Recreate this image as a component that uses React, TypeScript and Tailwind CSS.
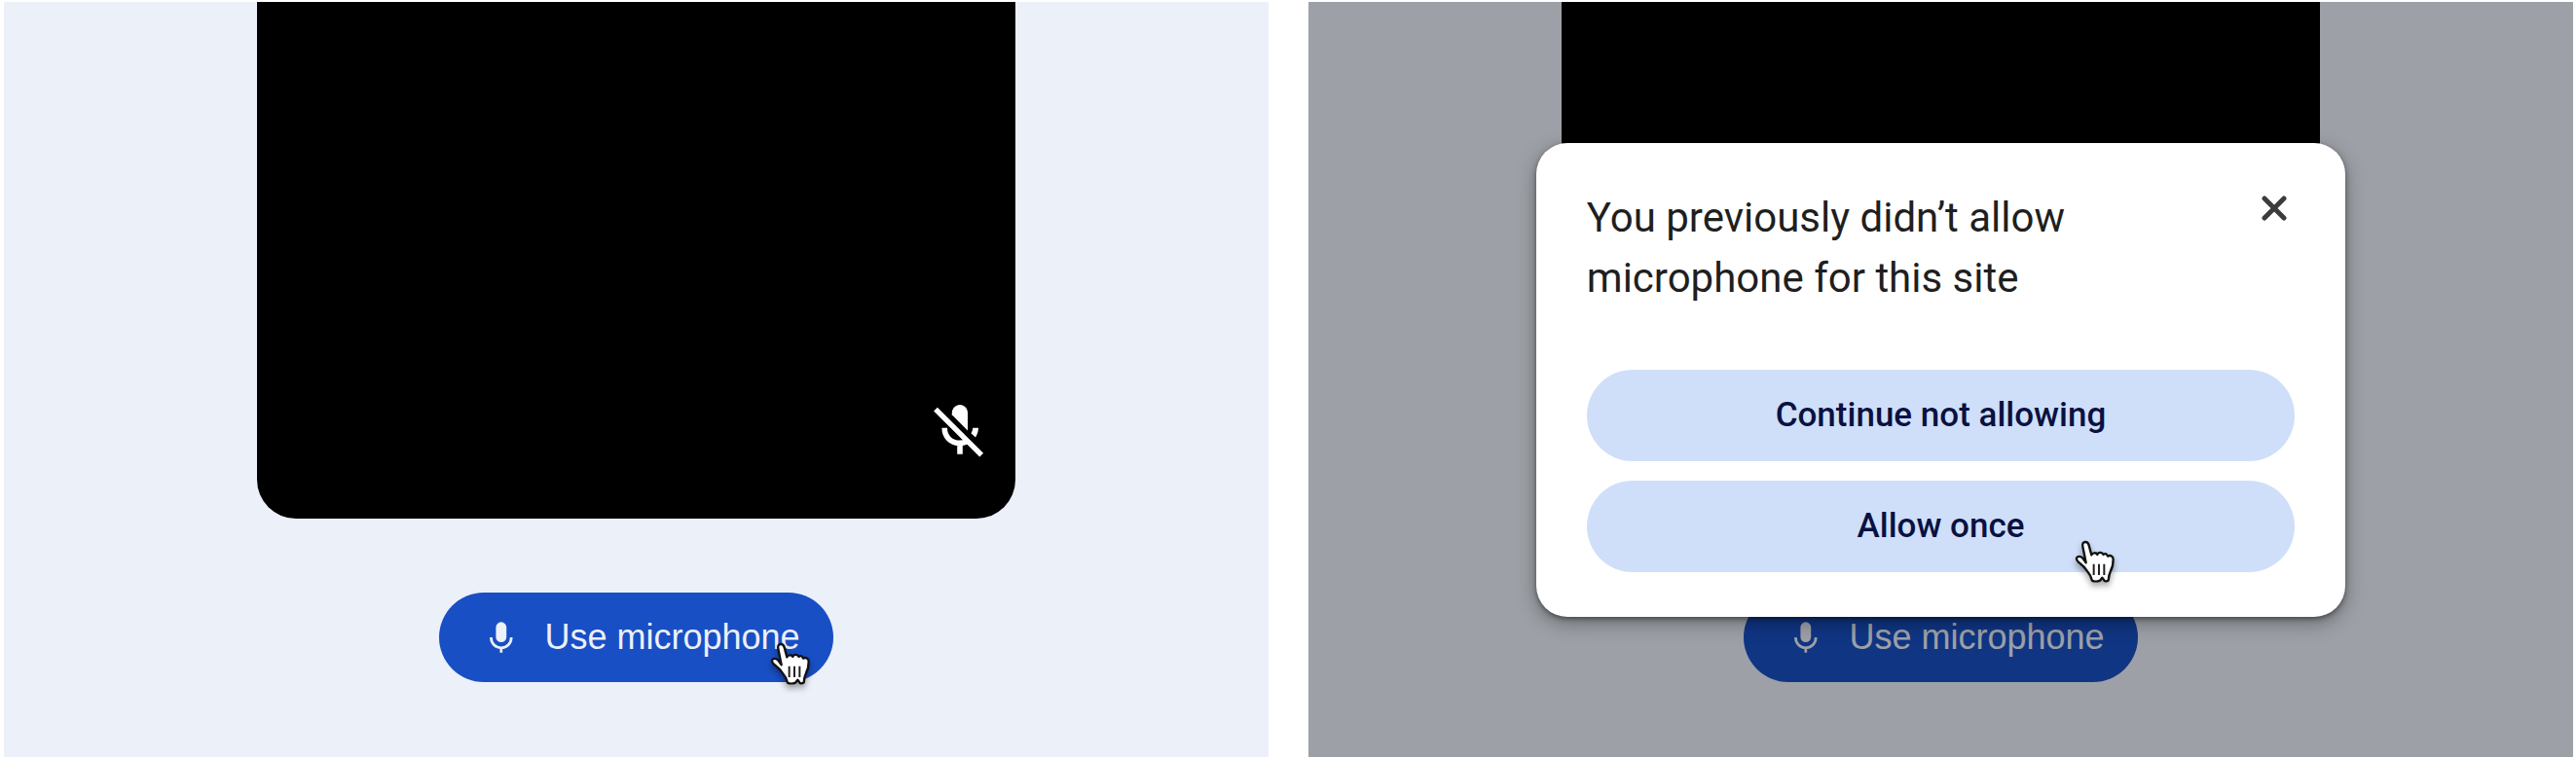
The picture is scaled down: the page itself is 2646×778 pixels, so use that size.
import type { ReactNode } from "react";

function MicIcon() {
  return (
    <svg viewBox="0 0 24 32" className="h-8 w-6 shrink-0" aria-hidden="true">
      <rect x="6.4" y="0.3" width="10.8" height="20.8" rx="5.4" fill="currentColor" />
      <path d="M1.4 16C1.4 22.4 6 26.8 11.8 26.8S22.2 22.4 22.2 16M11.8 26.8V31.8" fill="none" stroke="currentColor" strokeWidth="2.7" />
    </svg>
  );
}

function MicOffIcon() {
  return (
    <svg viewBox="0 0 54 56" className="h-14 w-[54px] text-white" role="img" aria-label="Microphone off">
      <path d="M36 27.4V9.6C36 4.8 32.4 1 28 1S19.8 4.8 19.8 9.6V11.2Z" fill="currentColor" />
      <path d="M3 5.6L50.2 52.6" fill="none" stroke="currentColor" strokeWidth="5.4" />
      <path d="M12.2 24.8C12.2 34.4 19 40.4 28 40.4C30.6 40.4 33 39.8 35.2 38.8M28 40.4V51.8" fill="none" stroke="currentColor" strokeWidth="5.6" />
      <path d="M41.2 24.8H47C46.9 28.4 45.8 31.8 44 34.6L39.4 30.2C40.6 28.6 41.2 26.8 41.2 24.8Z" fill="currentColor" />
    </svg>
  );
}

function HandCursor({ className }: { className: string }) {
  return (
    <svg
      viewBox="0 0 132 135"
      className={`pointer-events-none absolute h-[45px] w-11 overflow-visible drop-shadow-[0_4px_3px_rgba(0,0,0,0.35)] ${className}`}
      aria-hidden="true"
    >
      <path
        d="M38 70L28 20C26 11 30 6 36 6C42 6 45 9 47 16L55 46C58 38 70 38 73 45C76 36 88 37 92 45C95 40 102 42 105 50C113 45 122 50 122 59C122 74 119 86 114 95C110 103 108 112 107 124C102 129 95 128 93 123L88 116L81 125C74 128 62 128 57 125C54 113 49 104 42 96C35 86 31 80 22 74C14 68 8 61 9 56C11 49 21 49 28 56Z"
        fill="#fff"
        stroke="#111"
        strokeWidth="7"
        strokeLinejoin="round"
      />
      <path d="M62 74V108M78 74V108M94 74V108" fill="none" stroke="#222" strokeWidth="6" />
    </svg>
  );
}

function CloseIcon() {
  return (
    <svg viewBox="0 0 26 26" className="size-[26px]" aria-hidden="true">
      <path d="M3 3L23 23M23 3L3 23" stroke="currentColor" strokeWidth="5" strokeLinecap="round" />
    </svg>
  );
}

function CallPreview({ muted, pointer, children }: { muted?: boolean; pointer?: boolean; children?: ReactNode }) {
  return (
    <section className="relative flex flex-col items-center overflow-hidden bg-[#ebf0f9]">
      <div className="flex h-[531px] w-3/5 items-end justify-end rounded-b-[40px] bg-black pr-[31px] pb-[62px]">
        {muted && <MicOffIcon />}
      </div>
      <button
        type="button"
        className="relative mt-[76px] flex h-[92px] items-center gap-8 rounded-full bg-[#194fc4] pr-[34px] pl-[52px] font-['Liberation_Sans',sans-serif] text-[36px] leading-10 text-[#ebf0f9]"
      >
        <MicIcon />
        Use microphone
        {pointer && <HandCursor className="right-[22px] -bottom-1" />}
      </button>
      {children}
    </section>
  );
}

function PromptButton({ children }: { children: ReactNode }) {
  return (
    <button
      type="button"
      className="relative h-[94px] rounded-full bg-[#cfdff9] text-[35px] leading-10 font-medium text-[#0a1142]"
    >
      {children}
    </button>
  );
}

function PermissionPrompt() {
  return (
    <div className="absolute inset-0 flex items-start justify-center bg-black/33 pt-[145px]">
      <div
        role="dialog"
        aria-labelledby="prompt-title"
        className="flex w-[64%] flex-col rounded-[32px] bg-white px-[52px] pt-[46px] pb-[46px] font-['Roboto',sans-serif] shadow-[0_6px_20px_rgba(0,0,0,0.35),0_2px_5px_rgba(0,0,0,0.4)]"
      >
        <div className="flex items-start justify-between">
          <h2 id="prompt-title" className="max-w-[560px] text-[42px] leading-[62px] text-[#1f1f1f]">
            You previously didn’t allow microphone for this site
          </h2>
          <button type="button" aria-label="Close" className="p-2 text-[#3c3c3c]">
            <CloseIcon />
          </button>
        </div>
        <div className="mt-[63px] flex flex-col gap-5">
          <PromptButton>Continue not allowing</PromptButton>
          <PromptButton>
            Allow once
            <HandCursor className="right-[183px] -bottom-3" />
          </PromptButton>
        </div>
      </div>
    </div>
  );
}

export default function App() {
  return (
    <main className="grid min-h-screen grid-cols-2 gap-[41px] bg-white pt-0.5 pr-[3px] pl-1">
      <CallPreview muted pointer />
      <CallPreview>
        <PermissionPrompt />
      </CallPreview>
    </main>
  );
}
